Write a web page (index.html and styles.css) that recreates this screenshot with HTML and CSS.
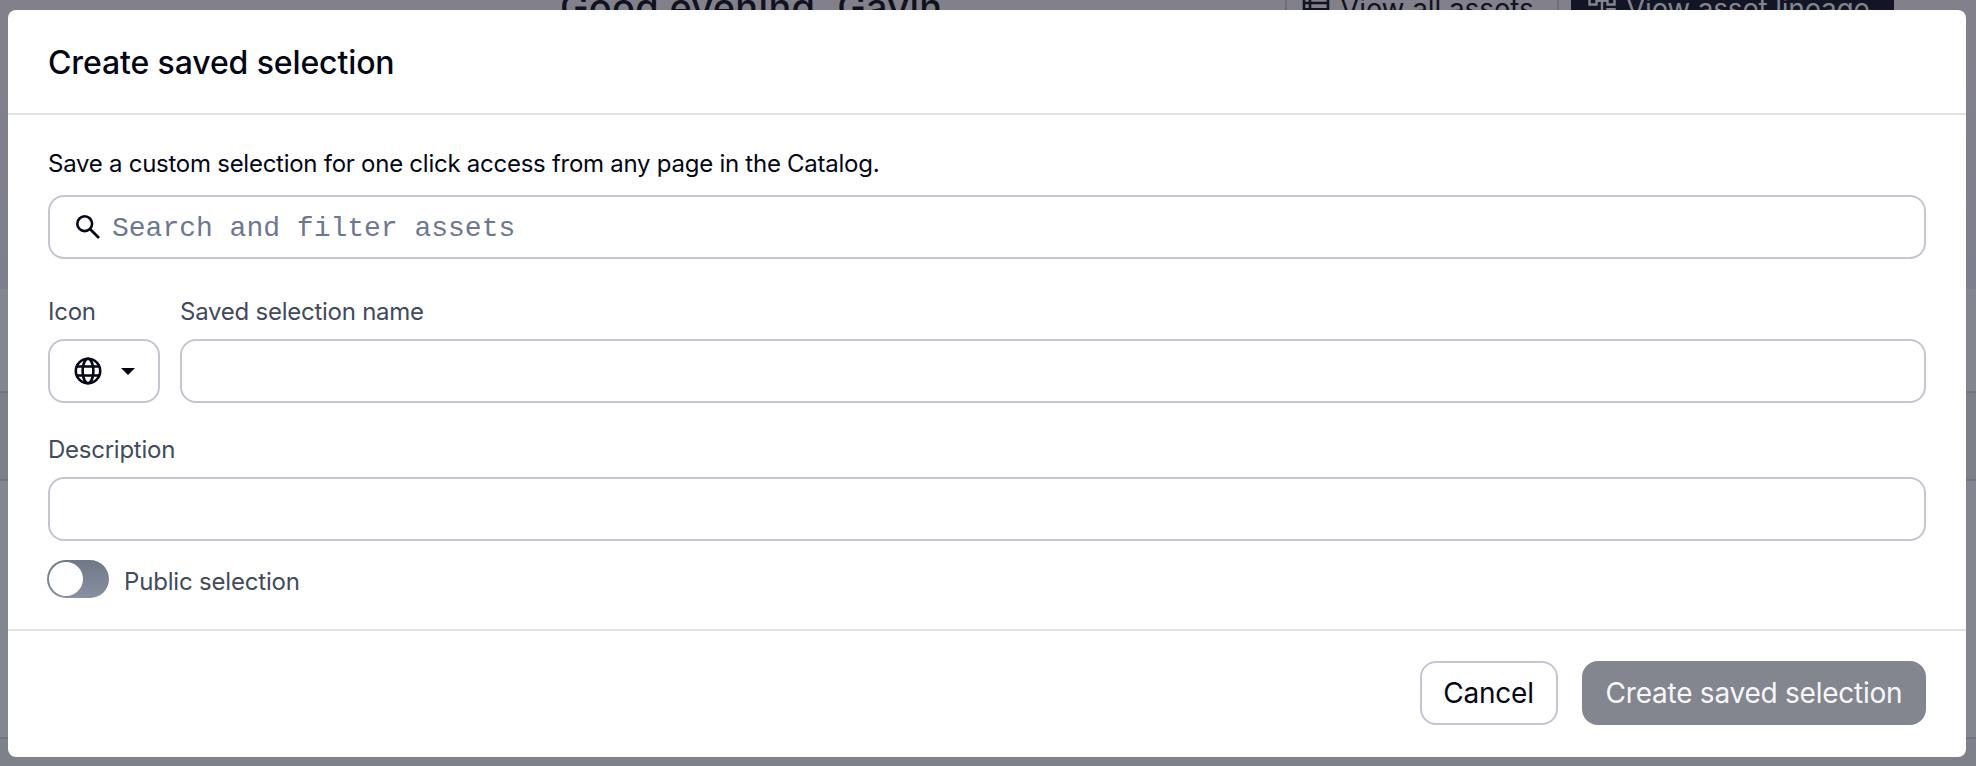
FILE: index.html
```
<!DOCTYPE html>
<html lang="en"><head><meta charset="utf-8"><title>Create saved selection</title><link rel="stylesheet" href="styles.css"></head>
<body>
<div class="page">
  <div class="hero">
    <div class="greeting">Good evening, Gavin</div>
    <div class="hero-btn hero-light">
      <svg width="28" height="28" viewBox="0 0 28 28" fill="none" stroke="currentColor" stroke-width="2.600"><path d="M2 3h24v20.500H2zM2 11h24M2 17.200h24M8 3v20"/></svg>
      <span>View all assets</span></div>
    <div class="hero-btn hero-dark">
      <svg width="28" height="28" viewBox="0 0 28 28" fill="none" stroke="currentColor" stroke-width="2.400"><path d="M1.500 4h7v8.500h-7zM19.500 4h7v8.500h-7zM19.500 17.200h7v8.500h-7zM8.500 8.700h11M14 8.700v12.800h5.500"/></svg>
      <span>View asset lineage</span></div>
  </div>
  <div class="band band-a"></div><div class="band band-b"></div><div class="band band-c"></div><div class="band band-d"></div>
</div>
<main class="dialog">
  <header class="head"><h1>Create saved selection</h1></header>
  <section class="body">
    <p class="intro">Save a custom selection for one click access from any page in the Catalog.</p>
    <div class="field search">
      <svg width="24" height="24" viewBox="0 0 24 24" fill="none" stroke="currentColor" stroke-width="2.6"><circle cx="8.700" cy="8.700" r="7.400"/><path d="M14 14l9 9"/></svg>
      <span class="placeholder">Search and filter assets</span>
    </div>
    <div class="row">
      <div class="col-icon"><div class="label">Icon</div>
        <div class="field picker">
          <svg width="28" height="28" viewBox="0 0 28 28" fill="none" stroke="currentColor" stroke-width="2.600"><circle cx="14" cy="14" r="12.200"/><ellipse cx="14" cy="14" rx="5.400" ry="12.200"/><path d="M2.500 9.500h23M2.500 18.500h23"/></svg>
          <svg width="14" height="7" viewBox="0 0 14 7" fill="currentColor"><path d="M0 0h14L7 7z"/></svg>
        </div></div>
      <div class="col-name"><div class="label">Saved selection name</div><div class="field"></div></div>
    </div>
    <div class="label l-desc">Description</div>
    <div class="field"></div>
    <div class="toggle-row"><div class="toggle"><div class="knob"></div></div><div class="label l-public">Public selection</div></div>
  </section>
  <footer class="foot">
    <div class="btn cancel">Cancel</div>
    <div class="btn create">Create saved selection</div>
  </footer>
</main>
</body></html>
```
FILE: styles.css
```
* { box-sizing: border-box; }
body { margin: 0; width: 1976px; height: 766px; overflow: hidden; position: relative; background: #83858f; color: #030615; font-family: Inter, sans-serif; white-space: nowrap; }
h1, p { margin: 0; }
.page { height: 766px; }
.hero { height: 289px; display: flex; align-items: flex-start; padding-left: 560px; background: linear-gradient(#82818b, #7e7f8e); }
.greeting { width: 725px; font-size: 38px; letter-spacing: 0.3px; font-weight: 500; line-height: 44px; margin-top: -19px; padding-top: 4px; color: #10121f; }
.hero-btn { height: 64px; margin-top: -26px; font-size: 28px; line-height: 54px; display: flex; align-items: center; gap: 10px; }
.hero-btn span { padding-top: 6px; }
.hero-light { width: 274px; border: 2px solid #6d6f7b; padding-left: 15px; margin-right: 12px; color: #10121f; letter-spacing: -0.1px; }
.hero-dark { width: 323px; padding-left: 17px; background: #131527; color: #83858d; letter-spacing: -0.2px; }
.band { border-bottom: 2px solid #72747f; }
.band-a { height: 104px; background: #83858f; }
.band-b { height: 88px; background: #7e8088; }
.band-c { height: 258px; background: #83858f; }
.band-d { height: 27px; background: #7f818a; border-bottom: 0; }
.dialog { position: absolute; left: 8px; top: 10px; width: 1958px; height: 747px; border-radius: 8px; background: #fff; display: flex; flex-direction: column; }
.head { height: 105px; flex: none; padding: 2px 40px 0; display: flex; align-items: center; border-bottom: 2px solid #e1e3e9; }
h1 { font-size: 32px; line-height: 40px; font-weight: 500; letter-spacing: -0.12px; }
.body { flex: 1; padding: 0 40px; }
.intro { font-size: 24px; line-height: 32px; padding-top: 33px; height: 80px; letter-spacing: -0.26px; }
.field { height: 64px; border: 2px solid #c2c6d1; border-radius: 16px; }
.search { display: flex; align-items: center; padding-left: 26px; gap: 12px; }
.placeholder { font: 28px/40px "Liberation Mono", monospace; color: #6d778f; padding-top: 3px; }
.row { display: flex; gap: 20px; margin-top: 36px; }
.col-icon { width: 112px; }
.col-name { flex: 1; }
.label { font-size: 24px; line-height: 32px; height: 44px; padding-top: 1px; color: #424a5e; letter-spacing: -0.25px; }
.picker { display: flex; align-items: center; padding-left: 24px; gap: 19px; }
.l-desc { margin-top: 30px; }
.toggle-row { display: flex; gap: 15px; margin-top: 19px; margin-left: -1px; }
.l-public { padding-top: 6px; letter-spacing: -0.18px; }
.toggle { width: 62px; height: 38px; border-radius: 19px; padding: 2px; background: linear-gradient(#6f7886, #8890a3); }
.knob { width: 34px; height: 34px; border-radius: 50%; background: #fff; }
.foot { height: 128px; flex: none; border-top: 2px solid #e1e3e9; padding: 30px 40px; display: flex; justify-content: flex-end; gap: 24px; }
.btn { height: 64px; border-radius: 16px; display: flex; align-items: center; justify-content: center; font-size: 28px; line-height: 40px; letter-spacing: -0.24px; }
.cancel { width: 138px; padding-right: 1px; border: 2px solid #c2c6d1; }
.create { width: 344px; background: #83868e; color: #f7f7f9; }
```
